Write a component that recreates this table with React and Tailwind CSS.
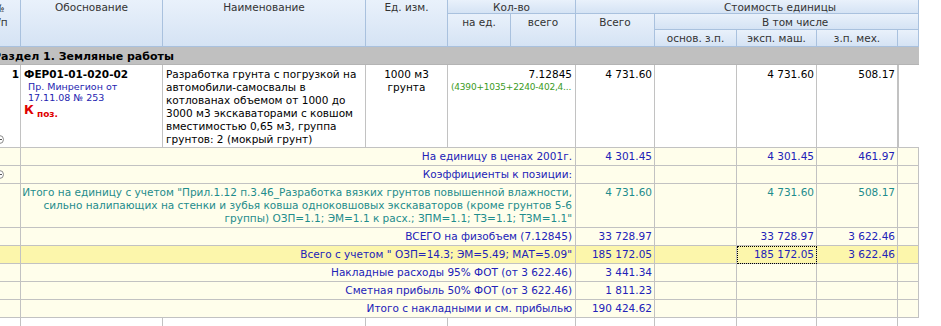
import React from 'react';

const cols = "grid grid-cols-[39px_142px_203px_82px_63px_65px_79px_82px_80px_81px_21px]";
const hd = "border-r border-b border-[#a9c1de] bg-gradient-to-b from-[#e9f1fb] to-[#d5e3f4] text-[#333] text-center";
const cell = "border-r border-b border-[#c2c2c2]";
const blue = "text-[#2222b8]";
const teal = "text-[#1e8c8c]";

function Toggle() {
  return (
    <span className="flex h-[9px] w-[9px] items-center justify-center rounded-full border border-[#8a8a8a] bg-white">
      <span className="h-px w-[5px] bg-[#555]" />
    </span>
  );
}

function SubRow({ label, tone, bg, total, mash, mech, toggle, focus, tall }) {
  const h = tall ? "h-[44px]" : "h-[18px]";
  return (
    <>
      <div className={`${cell} ${bg} ${h} flex items-center pl-[13px]`}>{toggle && <Toggle />}</div>
      <div className={`${cell} ${bg} ${h} col-span-5 pr-[3px] pt-[2px] text-right ${tone}`}>{label}</div>
      <div className={`${cell} ${bg} ${h} pr-[2px] pt-[2px] text-right ${tone}`}>{total}</div>
      <div className={`${cell} ${bg} ${h}`} />
      <div className={`${cell} ${bg} ${h} pr-[2px] pt-[2px] text-right ${tone} ${focus ? "outline-1 outline-dotted outline-black -outline-offset-1" : ""}`}>{mash}</div>
      <div className={`${cell} ${bg} ${h} pr-[2px] pt-[2px] text-right ${tone}`}>{mech}</div>
      <div className={`${cell} ${bg} ${h}`} />
    </>
  );
}

export default function App() {
  const yl = "bg-[#fffeeb]";
  return (
    <div className="h-[326px] w-[941px] overflow-hidden bg-white font-['DejaVu_Sans',sans-serif] text-[10.5px] leading-[13px] text-black">
      <div className="-ml-[18px] w-[937px]">
        {/* header */}
        <div className={`${cols} grid-rows-[14px_16px_17px]`}>
          <div className={`${hd} col-start-1 row-start-1 row-span-3 pr-[4px] pt-px leading-[14px]`}>№<br />п/п</div>
          <div className={`${hd} col-start-2 row-start-1 row-span-3 pt-px`}>Обоснование</div>
          <div className={`${hd} col-start-3 row-start-1 row-span-3 pt-px`}>Наименование</div>
          <div className={`${hd} col-start-4 row-start-1 row-span-3 pt-px`}>Ед. изм.</div>
          <div className={`${hd} col-start-5 col-span-2 row-start-1 pt-px`}>Кол-во</div>
          <div className={`${hd} col-start-5 row-start-2 row-span-2 pt-[2px]`}>на ед.</div>
          <div className={`${hd} col-start-6 row-start-2 row-span-2 pt-[2px]`}>всего</div>
          <div className={`${hd} col-start-7 col-span-5 row-start-1 pl-[148px] pt-px text-left`}>Стоимость единицы</div>
          <div className={`${hd} col-start-7 row-start-2 row-span-2 pt-[2px]`}>Всего</div>
          <div className={`${hd} col-start-8 col-span-4 row-start-2 pl-[107px] pt-[2px] text-left`}>В том числе</div>
          <div className={`${hd} col-start-8 row-start-3 pt-[2px]`}>основ. з.п.</div>
          <div className={`${hd} col-start-9 row-start-3 pt-[2px]`}>эксп. маш.</div>
          <div className={`${hd} col-start-10 row-start-3 pt-[2px]`}>з.п. мех.</div>
          <div className={`${hd} col-start-11 row-start-3`} />
        </div>

        {/* body */}
        <div className={cols}>
          <div className="col-span-11 h-[18px] border-b border-[#b4b4b4] bg-[#c0c0c0] pl-[11px] pt-[3px] text-[11px] font-bold">
            Раздел 1. Земляные работы
          </div>

          {/* position row */}
          <div className={`${cell} flex h-[83px] flex-col`}>
            <span className="pr-px pt-[3px] text-right font-bold">1</span>
            <span className="mb-[3px] ml-[13px] mt-auto"><Toggle /></span>
          </div>
          <div className={`${cell} pl-[3px] pt-[3px]`}>
            <div className="font-bold">ФЕР01-01-020-02</div>
            <div className="pl-[4px] text-[9.5px] leading-[11px] text-[#2424b0]">Пр. Минрегион от<br />17.11.08 № 253</div>
            <div className="pt-[1px] font-bold text-[#e00000]">
              <span className="text-[12px]">К</span>
              <span className="relative top-[3px] text-[9px]"> поз.</span>
            </div>
          </div>
          <div className={`${cell} whitespace-nowrap pl-[3px] pt-[3px]`}>
            Разработка грунта с погрузкой на<br />
            автомобили-самосвалы в<br />
            котлованах объемом от 1000 до<br />
            3000 м3 экскаваторами с ковшом<br />
            вместимостью 0,65 м3, группа<br />
            грунтов: 2 (мокрый грунт)
          </div>
          <div className={`${cell} pt-[3px] text-center`}>1000 м3<br />грунта</div>
          <div className={`${cell} col-span-2 overflow-hidden pr-[3px] pt-[3px] text-right`}>
            <div>7.12845</div>
            <div className="whitespace-nowrap pl-[3px] text-left text-[9px] tracking-[-0.2px] text-[#3b9a1e]">(4390+1035+2240-402,4...</div>
          </div>
          <div className={`${cell} pr-[2px] pt-[3px] text-right`}>4 731.60</div>
          <div className={cell} />
          <div className={`${cell} pr-[2px] pt-[3px] text-right`}>4 731.60</div>
          <div className={`${cell} pr-[2px] pt-[3px] text-right`}>508.17</div>
          <div className="border-b border-l border-[#c2c2c2]" />

          <SubRow label="На единицу в ценах 2001г." tone={blue} bg={yl} total="4 301.45" mash="4 301.45" mech="461.97" />
          <SubRow label="Коэффициенты к позиции:" tone={blue} bg={yl} toggle />
          <SubRow
            tall
            tone={teal}
            bg={yl}
            total="4 731.60"
            mash="4 731.60"
            mech="508.17"
            label={
              <>
                Итого на единицу с учетом "Прил.1.12 п.3.46_Разработка вязких грунтов повышенной влажности,<br />
                сильно налипающих на стенки и зубья ковша одноковшовых экскаваторов (кроме грунтов 5-6<br />
                группы) ОЗП=1.1; ЭМ=1.1 к расх.; ЗПМ=1.1; ТЗ=1.1; ТЗМ=1.1"
              </>
            }
          />
          <SubRow label="ВСЕГО на физобъем (7.12845)" tone={blue} bg={yl} total="33 728.97" mash="33 728.97" mech="3 622.46" />
          <SubRow label={'Всего с учетом " ОЗП=14.3; ЭМ=5.49; МАТ=5.09"'} tone={blue} bg="bg-[#fcf6ab]" total="185 172.05" mash="185 172.05" mech="3 622.46" focus />
          <SubRow label="Накладные расходы 95% ФОТ (от 3 622.46)" tone={blue} bg={yl} total="3 441.34" />
          <SubRow label="Сметная прибыль 50% ФОТ (от 3 622.46)" tone={blue} bg={yl} total="1 811.23" />
          <SubRow label="Итого с накладными и см. прибылью" tone={blue} bg={yl} total="190 424.62" />

          {[...Array(11)].map((_, i) => (
            <div key={i} className={`h-[18px] ${i === 10 ? "" : "border-r border-[#c2c2c2]"} ${i === 4 ? "col-span-2" : ""}`} />
          )).filter((_, i) => i !== 5)}
        </div>
      </div>
    </div>
  );
}
